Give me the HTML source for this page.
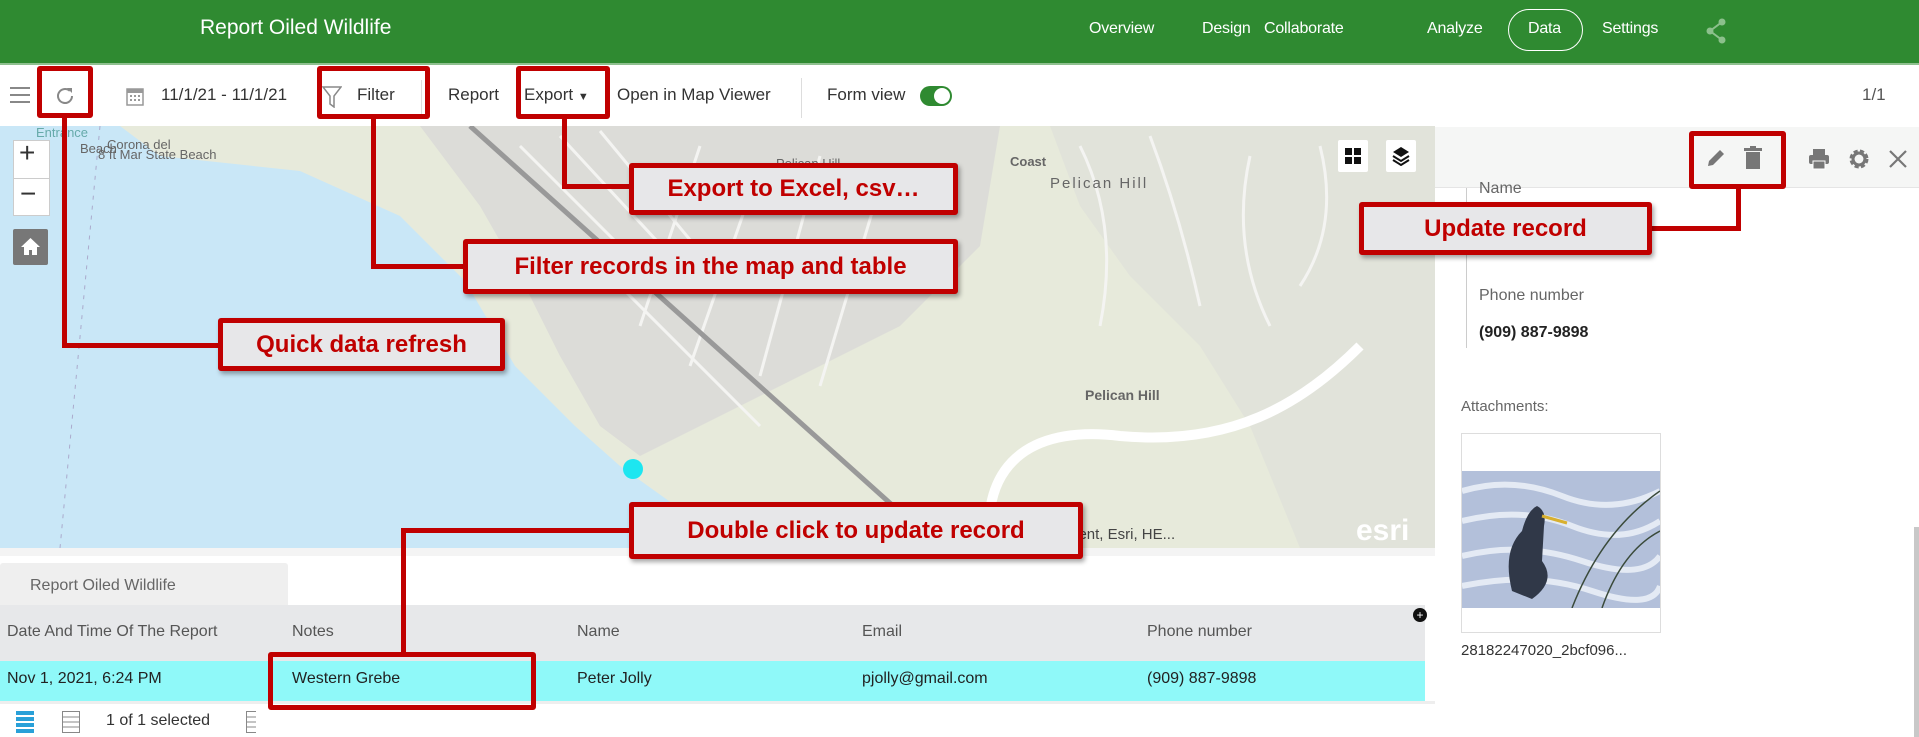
<!DOCTYPE html>
<html><head><meta charset="utf-8"><style>
*{box-sizing:border-box;margin:0;padding:0}
body{width:1919px;height:737px;overflow:hidden;position:relative;font-family:"Liberation Sans",Arial,sans-serif;background:#fff;color:#333}
.a{position:absolute;white-space:nowrap}
.hdr{left:0;top:0;width:1919px;height:65px;background:#2f8a31;border-bottom:2px solid #8fc08f}
.nav{color:#fff;font-size:16px;top:20px;letter-spacing:-0.2px}
.tb{font-size:17px;color:#333;top:85px}
.box{position:absolute;border:5px solid #c00000;border-radius:3px}
.call{position:absolute;border:5px solid #c00000;border-radius:3px;background:#e7e7e9;color:#c00000;font-weight:bold;font-size:24px;display:flex;align-items:center;justify-content:center;box-shadow:2px 3px 5px rgba(0,0,0,.35)}
.ln{position:absolute;background:#c00000}
.th{top:623px;font-size:16px;color:#555}
.td{top:670px;font-size:16px;color:#222}
</style></head><body>
<div class="a hdr"></div>
<div class="a" style="left:200px;top:16px;color:#fff;font-size:21px">Report Oiled Wildlife</div>
<div class="a nav" style="left:1089px">Overview</div>
<div class="a nav" style="left:1202px">Design</div>
<div class="a nav" style="left:1264px">Collaborate</div>
<div class="a nav" style="left:1427px">Analyze</div>
<div class="a" style="left:1508px;top:9px;width:75px;height:42px;border:1.5px solid #fff;border-radius:21px"></div>
<div class="a nav" style="left:1528px">Data</div>
<div class="a nav" style="left:1602px">Settings</div>
<svg class="a" style="left:1704px;top:17px" width="24" height="28" viewBox="0 0 24 28"><g fill="#8cc08c"><circle cx="18" cy="5" r="3.5"/><circle cx="6" cy="14" r="3.5"/><circle cx="18" cy="23" r="3.5"/></g><path d="M18 5L6 14L18 23" stroke="#8cc08c" stroke-width="2" fill="none"/></svg>

<!-- toolbar -->
<svg class="a" style="left:10px;top:87px" width="20" height="16"><g fill="#888"><rect y="0" width="20" height="2"/><rect y="7" width="20" height="2"/><rect y="14" width="20" height="2"/></g></svg>
<svg class="a" style="left:53px;top:84px" width="24" height="24" viewBox="0 0 24 24"><path d="M19 12a7 7 0 1 1-2.2-5.1" stroke="#888" stroke-width="2" fill="none"/><path d="M14 4h5v5z" fill="#888"/></svg>
<svg class="a" style="left:126px;top:86px" width="18" height="20" viewBox="0 0 18 20"><rect x="1" y="3" width="16" height="16" fill="none" stroke="#999" stroke-width="1.5"/><rect x="1" y="3" width="16" height="4" fill="#999"/><g fill="#999"><rect x="4" y="9" width="2" height="2"/><rect x="8" y="9" width="2" height="2"/><rect x="12" y="9" width="2" height="2"/><rect x="4" y="13" width="2" height="2"/><rect x="8" y="13" width="2" height="2"/><rect x="12" y="13" width="2" height="2"/></g></svg>
<div class="a tb" style="left:161px">11/1/21 - 11/1/21</div>
<svg class="a" style="left:322px;top:86px" width="20" height="22" viewBox="0 0 20 22"><path d="M1 1h18l-7 9v11l-4-3v-8z" fill="none" stroke="#888" stroke-width="1.5"/></svg>
<div class="a tb" style="left:357px">Filter</div>
<div class="a" style="left:421px;top:80px;width:1px;height:36px;background:#ddd"></div>
<div class="a tb" style="left:448px">Report</div>
<div class="a tb" style="left:524px">Export <span style="font-size:11px">▼</span></div>
<div class="a tb" style="left:617px">Open in Map Viewer</div>
<div class="a" style="left:801px;top:78px;width:1px;height:40px;background:#ddd"></div>
<div class="a tb" style="left:827px">Form view</div>
<div class="a" style="left:920px;top:86px;width:32px;height:20px;border-radius:10px;background:#2f8a31"></div>
<div class="a" style="left:934px;top:88px;width:16px;height:16px;border-radius:8px;background:#fff"></div>
<div class="a tb" style="left:1862px;color:#555">1/1</div>

<!-- map -->
<svg class="a" style="left:0;top:126px" width="1435" height="422" viewBox="0 0 1435 422">
<rect width="1435" height="422" fill="#e7eadb"/>
<path d="M420 0L1000 0L980 120L900 200L780 260L700 300L640 330L600 300L560 230L520 150L480 80z" fill="#dcdcd8"/>
<path d="M1050 0L1435 0L1435 422L1300 422L1250 300L1200 220L1130 150L1080 80z" fill="#e1e3da"/>
<g stroke="#f4f4f2" stroke-width="3" fill="none">
<path d="M520 20L620 120M560 10L680 140M600 5L720 150M700 20L640 200M760 40L690 240M820 30L760 250M880 60L820 260M620 160L760 300"/>
<path d="M1080 20Q1120 100 1100 200M1150 10Q1180 90 1200 180M1250 30Q1230 120 1270 200M1320 20Q1340 100 1300 160"/>
</g>
<path d="M0 0L120 0L160 30L300 45L400 90L465 155L515 240L575 300L620 340L690 390L725 422L0 422z" fill="#c9e7f7"/>
<path d="M100 0L60 422" stroke="#aac" stroke-width="1" stroke-dasharray="4 6"/>
<path d="M470 0L940 422" stroke="#999" stroke-width="5"/>
<path d="M990 422C980 330 1040 300 1120 310C1230 320 1300 280 1360 220" stroke="#fff" stroke-width="10" fill="none"/>
<circle cx="633" cy="343" r="10" fill="#1de6f0"/>
<g font-family="Liberation Sans" font-size="13" fill="#666">
<text x="36" y="11" fill="#6aa">Entrance</text><text x="80" y="27">Beach</text><text x="107" y="23">Corona del</text><text x="98" y="33">8 ft   Mar State Beach</text>
<text x="776" y="42">Pelican Hill</text><text x="776" y="57">Golf Course</text>
<text x="1050" y="62" font-size="15" letter-spacing="2">Pelican Hill</text>
<text x="1085" y="274" font-weight="bold" font-size="14">Pelican Hill</text>
<text x="1010" y="40" font-weight="bold">Coast</text>
<text x="915" y="413" font-size="15" fill="#444">ureau of Land Management, Esri, HE...</text>
<text x="1356" y="414" font-size="30" fill="#fff" font-weight="bold">esri</text>
</g>
</svg>
<div class="a" style="left:13px;top:140px;width:37px;height:76px;background:#fff;border:1px solid #ccc"></div>
<div class="a" style="left:19px;top:137px;font-size:28px;color:#333">+</div>
<div class="a" style="left:13px;top:178px;width:37px;height:1px;background:#ccc"></div>
<div class="a" style="left:20px;top:178px;font-size:28px;color:#333">−</div>
<div class="a" style="left:13px;top:229px;width:35px;height:36px;background:#777;border-radius:2px"></div>
<svg class="a" style="left:20px;top:236px" width="21" height="21" viewBox="0 0 21 21"><path d="M10.5 2L1 11h3v8h5v-5h3v5h5v-8h3z" fill="#fff"/></svg>
<div class="a" style="left:1338px;top:140px;width:30px;height:32px;background:#fff;border-radius:2px"></div>
<svg class="a" style="left:1345px;top:148px" width="16" height="16"><g fill="#111"><rect width="7" height="7"/><rect x="9" width="7" height="7"/><rect y="9" width="7" height="7"/><rect x="9" y="9" width="7" height="7"/></g></svg>
<div class="a" style="left:1386px;top:140px;width:30px;height:32px;background:#fff;border-radius:2px"></div>
<svg class="a" style="left:1392px;top:146px" width="18" height="20" viewBox="0 0 18 20"><path d="M9 1L17 6L9 11L1 6z" fill="#111"/><path d="M1 10L9 15L17 10M1 14L9 19L17 14" stroke="#111" stroke-width="2" fill="none"/></svg>

<!-- right panel -->
<div class="a" style="left:1435px;top:126px;width:484px;height:611px;background:#fff"></div>
<div class="a" style="left:1435px;top:127px;width:484px;height:61px;background:#f5f6f5;border-bottom:1px solid #e5e5e5"></div>
<svg class="a" style="left:1705px;top:147px" width="22" height="22" viewBox="0 0 22 22"><path d="M3 19l1-5L15 3l4 4L8 18z" fill="#777"/></svg>
<svg class="a" style="left:1744px;top:146px" width="18" height="24" viewBox="0 0 18 24"><rect x="2" y="6" width="14" height="17" fill="#777"/><rect x="0" y="2" width="18" height="3" fill="#777"/><rect x="6" y="0" width="6" height="3" fill="#777"/></svg>
<svg class="a" style="left:1808px;top:148px" width="22" height="22" viewBox="0 0 22 22"><rect x="5" y="1" width="12" height="6" fill="#777"/><rect x="1" y="7" width="20" height="9" rx="2" fill="#777"/><rect x="5" y="13" width="12" height="8" fill="#777" stroke="#fff"/></svg>
<svg class="a" style="left:1848px;top:148px" width="22" height="22" viewBox="0 0 22 22"><circle cx="11" cy="11" r="7" fill="none" stroke="#777" stroke-width="5" stroke-dasharray="3.6 2"/><circle cx="11" cy="11" r="6" fill="none" stroke="#777" stroke-width="3"/></svg>
<svg class="a" style="left:1888px;top:149px" width="20" height="20"><path d="M2 2L18 18M18 2L2 18" stroke="#777" stroke-width="2.2"/></svg>
<div class="a" style="left:1466px;top:188px;width:1px;height:160px;background:#ccc"></div>
<div class="a" style="left:1479px;top:180px;font-size:16px;color:#666">Name</div>
<div class="a" style="left:1479px;top:214px;font-size:16px;color:#444">Peter Jolly</div>
<div class="a" style="left:1479px;top:287px;font-size:16px;color:#666">Phone number</div>
<div class="a" style="left:1479px;top:324px;font-size:16px;color:#222;font-weight:bold">(909) 887-9898</div>
<div class="a" style="left:1461px;top:398px;font-size:15px;color:#666">Attachments:</div>
<div class="a" style="left:1461px;top:433px;width:200px;height:200px;border:1px solid #ddd;background:#fff"></div>
<svg class="a" style="left:1462px;top:471px" width="198" height="137" viewBox="0 0 198 137">
<rect width="198" height="137" fill="#b3c0da"/>
<path d="M0 20Q50 5 100 25T198 20M0 50Q60 35 110 55T198 50M0 85Q60 70 120 90T198 85M0 115Q70 100 130 120T198 115" stroke="#e4eaf4" stroke-width="6" fill="none"/>
<path d="M50 120Q40 80 60 60Q65 40 75 35Q85 40 82 55L80 90Q95 110 70 128z" fill="#303848"/>
<path d="M80 45L105 52" stroke="#d8b030" stroke-width="3"/>
<path d="M110 137Q140 60 198 20M140 137Q160 80 198 60" stroke="#3a4a3a" stroke-width="1.5" fill="none"/>
</svg>
<div class="a" style="left:1461px;top:642px;font-size:15px;color:#333">28182247020_2bcf096...</div>
<div class="a" style="left:1914px;top:527px;width:5px;height:210px;background:#c8c8c8"></div>

<!-- table -->
<div class="a" style="left:0;top:548px;width:1435px;height:8px;background:#f4f4f4"></div>
<div class="a" style="left:0;top:563px;width:288px;height:43px;background:#efefef;border-radius:3px 3px 0 0"></div>
<div class="a" style="left:30px;top:577px;font-size:16px;color:#666">Report Oiled Wildlife</div>
<div class="a" style="left:0;top:605px;width:1425px;height:56px;background:#e7e8ea"></div>
<div class="a th" style="left:7px">Date And Time Of The Report</div>
<div class="a th" style="left:292px">Notes</div>
<div class="a th" style="left:577px">Name</div>
<div class="a th" style="left:862px">Email</div>
<div class="a th" style="left:1147px">Phone number</div>
<div class="a" style="left:1413px;top:608px;width:14px;height:14px;border-radius:7px;background:#111;color:#fff;font-size:12px;line-height:14px;text-align:center">+</div>
<div class="a" style="left:0;top:661px;width:1425px;height:40px;background:#8ff9f9"></div>
<div class="a td" style="left:7px">Nov 1, 2021, 6:24 PM</div>
<div class="a td" style="left:292px">Western Grebe</div>
<div class="a td" style="left:577px">Peter Jolly</div>
<div class="a td" style="left:862px">pjolly@gmail.com</div>
<div class="a td" style="left:1147px">(909) 887-9898</div>
<div class="a" style="left:0;top:701px;width:1435px;height:3px;background:#eee"></div>
<svg class="a" style="left:16px;top:711px" width="240" height="22"><g fill="#29a0d8"><rect width="18" height="4"/><rect y="6" width="18" height="4"/><rect y="12" width="18" height="4"/><rect y="18" width="18" height="4"/></g><g fill="none" stroke="#888"><rect x="46.5" y="0.5" width="17" height="21"/><path d="M47 6h16M47 11h16M47 16h16"/><rect x="230.5" y="0.5" width="17" height="21"/><path d="M231 6h16M231 11h16M231 16h16"/></g></svg>
<div class="a" style="left:106px;top:712px;font-size:16px;color:#333">1 of 1 selected</div>

<!-- callouts -->
<div class="ln" style="left:62px;top:118px;width:5px;height:230px"></div>
<div class="ln" style="left:62px;top:343px;width:160px;height:5px"></div>
<div class="ln" style="left:371px;top:119px;width:5px;height:150px"></div>
<div class="ln" style="left:371px;top:264px;width:95px;height:5px"></div>
<div class="ln" style="left:562px;top:119px;width:5px;height:70px"></div>
<div class="ln" style="left:562px;top:184px;width:70px;height:5px"></div>
<div class="ln" style="left:1736px;top:189px;width:5px;height:42px"></div>
<div class="ln" style="left:1648px;top:226px;width:93px;height:5px"></div>
<div class="ln" style="left:401px;top:528px;width:5px;height:128px"></div>
<div class="ln" style="left:401px;top:528px;width:230px;height:5px"></div>

<div class="box" style="left:37px;top:66px;width:56px;height:52px"></div>
<div class="box" style="left:317px;top:66px;width:113px;height:53px"></div>
<div class="box" style="left:516px;top:66px;width:94px;height:53px"></div>
<div class="box" style="left:1689px;top:131px;width:97px;height:58px"></div>
<div class="box" style="left:268px;top:652px;width:268px;height:58px"></div>

<div class="call" style="left:629px;top:163px;width:329px;height:52px">Export to Excel, csv…</div>
<div class="call" style="left:463px;top:239px;width:495px;height:55px">Filter records in the map and table</div>
<div class="call" style="left:218px;top:318px;width:287px;height:53px">Quick data refresh</div>
<div class="call" style="left:1359px;top:202px;width:293px;height:53px">Update record</div>
<div class="call" style="left:629px;top:502px;width:454px;height:57px">Double click to update record</div>
</body></html>
